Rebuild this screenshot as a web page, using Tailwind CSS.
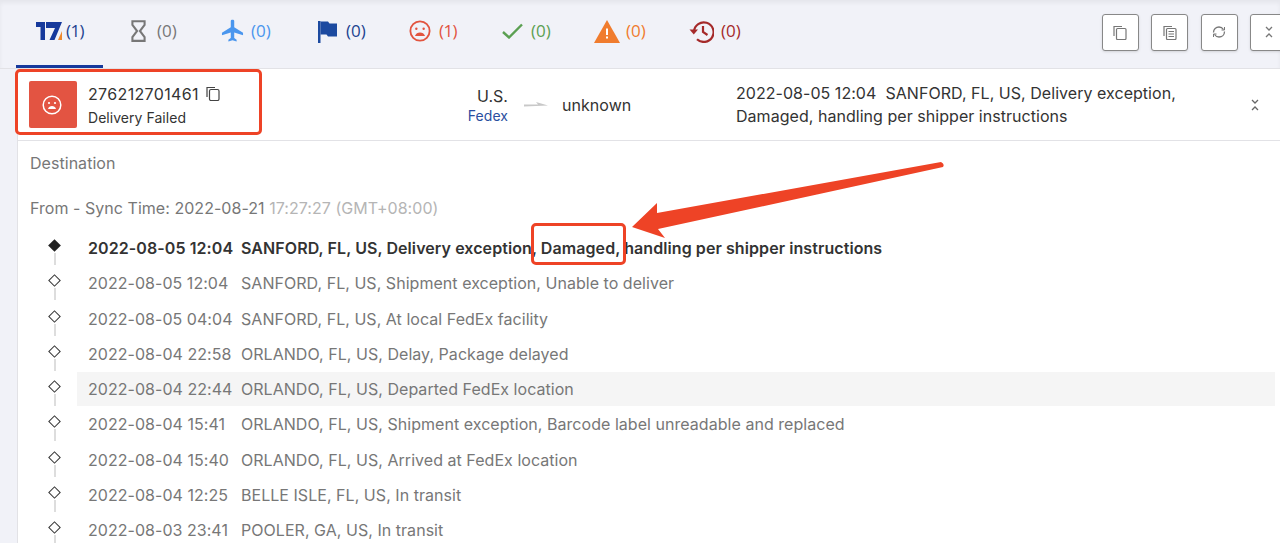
<!DOCTYPE html>
<html lang="en">
<head>
  <meta charset="UTF-8" />
  <title>Tracking result</title>
  <script src="https://cdn.jsdelivr.net/npm/@tailwindcss/browser@4"></script>
</head>
<body class="relative h-[543px] w-[1280px] overflow-hidden bg-[#f1f2f8] font-['Inter',sans-serif] text-[#333] tracking-[0.04px]">

  <!-- Status tabs -->
  <div class="flex h-[69px] items-center border-b border-[#e2e2e6] font-['Open_Sans',sans-serif] text-[17px] tracking-normal shadow-[inset_0_3px_4px_rgba(0,0,0,0.05)]">
    <div class="ml-4 flex h-[68px] w-[87px] items-center gap-[4px] border-b-[3px] border-[#16399c] pb-[3px] pl-[20px] text-[#1c4390]">
      <svg width="26" height="20" viewBox="0 0 26 20"><path d="M0 1h9v18H4.500V6H0z" fill="#16399c"/><path d="M10 1h16l-7.500 18h-5l5.500-12H10z" fill="#16399c"/><path d="M26 10v9h-4z" fill="#f08a2e"/></svg>
      <span class="tracking-[-0.6px]">(1)</span>
    </div>
    <div class="ml-[28px] flex w-[90px] items-center gap-[11px] pb-[6px] text-[#777]">
      <svg width="15" height="24" viewBox="0 0 16 24" fill="none" stroke="#777" stroke-width="2.200"><path d="M1.500 1.500h13v4L9.500 12l5 6.500v4h-13v-4l5-6.500-5-6.500z"/></svg>
      <span>(0)</span>
    </div>
    <div class="flex w-[97px] items-center gap-[7px] pb-[6px] text-[#4a96ee]">
      <svg width="23" height="24" viewBox="0 0 24 24" fill="#4a96ee"><path d="M10.200 1.500c0-.8.800-1.200 1.800-1.200s1.800.4 1.800 1.200v6.700L23 13.800v2.600l-9.200-2.900v5.700l2.500 2v1.800L12 21.700 7.700 23v-1.800l2.500-2v-5.700L1 16.400v-2.600l9.200-5.600z"/></svg>
      <span>(0)</span>
    </div>
    <div class="flex w-[91px] items-center gap-[9px] pb-[6px] text-[#1c4390]">
      <svg width="19" height="23" viewBox="0 0 19 23" fill="#1c4aa0"><path d="M0 1h2.500v22H0z"/><path d="M2.500 1.500H10l1.500 2H19v13H10l-1.500-2h-6z"/></svg>
      <span>(0)</span>
    </div>
    <div class="flex w-[93px] items-center gap-[8px] pb-[6px] text-[#e2543f]">
      <svg width="22" height="22" viewBox="0 0 24 24" fill="none" stroke="#e2543f" stroke-width="2"><circle cx="12" cy="12" r="10.500"/><circle cx="8" cy="9.500" r="1.300" fill="#e2543f" stroke="none"/><circle cx="16" cy="9.500" r="1.300" fill="#e2543f" stroke="none"/><path d="M6.500 17.500c1-3 3-4 5.500-4s4.500 1 5.500 4z" fill="#e2543f" stroke="none"/></svg>
      <span class="tracking-[-0.6px]">(1)</span>
    </div>
    <div class="flex w-[92px] items-center gap-[8px] pb-[6px] text-[#5ba052]">
      <svg width="21" height="16" viewBox="0 0 21 16" fill="none" stroke="#5ba052" stroke-width="2.400"><path d="M1 9l6 5.500L20 1.500"/></svg>
      <span>(0)</span>
    </div>
    <div class="flex w-[95px] items-center gap-[6px] pb-[6px] text-[#f07c2e]">
      <svg width="26" height="23" viewBox="0 0 26 23"><path d="M13 0l13 23H0z" fill="#f07c2e"/><path d="M12 8.500h2v6.500h-2zM12 16.500h2v2h-2z" fill="#fff"/></svg>
      <span>(0)</span>
    </div>
    <div class="flex items-center gap-[7px] pb-[6px] text-[#a52a2a]">
      <svg width="25" height="23" viewBox="0 0 25 23" fill="none" stroke="#a52a2a" stroke-width="2.200"><path d="M5 11.500a9.800 9.800 0 1 1 3 7.700"/><path d="M0.500 9.500h8.500L4.800 14.500z" fill="#a52a2a" stroke="none"/><path d="M14 6v6l4.500 3"/></svg>
      <span>(0)</span>
    </div>

    <!-- Toolbar buttons -->
    <div class="ml-auto -mr-[7px] -mt-[4px] flex gap-[12.500px]">
      <button class="flex h-[37px] w-[37px] items-center justify-center rounded-[3px] border border-[#888] bg-white shadow-sm">
        <svg width="14" height="15" viewBox="0 0 14 15" fill="none" stroke="#777" stroke-width="1.200"><path d="M1 11V1.500h8"/><rect x="3.500" y="3.500" width="9.500" height="11" rx="1"/></svg>
      </button>
      <button class="flex h-[37px] w-[37px] items-center justify-center rounded-[3px] border border-[#888] bg-white shadow-sm">
        <svg width="14" height="15" viewBox="0 0 14 15" fill="none" stroke="#777" stroke-width="1.200"><path d="M1 11V1.500h8"/><rect x="3.500" y="3.500" width="9.500" height="11" rx="1"/><path d="M5.500 6.500h5.500M5.500 9h5.500M5.500 11.500h5.500"/></svg>
      </button>
      <button class="flex h-[37px] w-[37px] items-center justify-center rounded-[3px] border border-[#888] bg-white shadow-sm">
        <svg width="14" height="12" viewBox="0 0 14 12" fill="none" stroke="#777" stroke-width="1.300"><path d="M1.500 6.500C1.500 3 4 1 7 1c2 0 3.500 1 4.500 2.500"/><path d="M12.500 5.500C12.500 9 10 11 7 11c-2 0-3.500-1-4.500-2.500"/><path d="M9.500 4h3V1M4.500 8h-3v3" stroke-width="1"/></svg>
      </button>
      <button class="flex h-[37px] w-[37px] items-center justify-center rounded-[3px] border border-[#888] bg-white shadow-sm">
        <svg width="8" height="12" viewBox="0 0 8 12" fill="none" stroke="#777" stroke-width="1.300"><path d="M1 1l3 3 3-3M1 11l3-3 3 3"/></svg>
      </button>
    </div>
  </div>

  <!-- Result card -->
  <div class="ml-[17px] h-[474px] border-l border-[#e2e2e6] bg-white">
    <div class="flex h-[72px] items-center border-b border-[#e2e2e6] text-[16px]">
      <div class="ml-[11px] flex h-[47px] w-[48px] items-center justify-center rounded-[2px] bg-[#e35442]">
        <svg class="-ml-[2px]" width="20" height="20" viewBox="0 0 20 20" fill="none" stroke="#fff" stroke-width="1.500"><circle cx="10" cy="10" r="8.800"/><circle cx="7" cy="8" r="1.100" fill="#fff" stroke="none"/><circle cx="13" cy="8" r="1.100" fill="#fff" stroke="none"/><path d="M6 14c.7-2.200 2.200-3 4-3s3.300.8 4 3z" fill="#fff" stroke="none"/></svg>
      </div>
      <div class="ml-[11px] w-[170px]">
        <div class="flex items-center gap-[7px] leading-[22px]">
          <span class="tracking-[0.35px]">276212701461</span>
          <svg class="-mt-[1px]" width="14" height="15" viewBox="0 0 14 15" fill="none" stroke="#444" stroke-width="1.200"><path d="M1 11V1.500h8"/><rect x="3.500" y="3.500" width="9.500" height="11" rx="1.500"/></svg>
        </div>
        <div class="mt-[4px] text-[14px] leading-[18px]">Delivery Failed</div>
      </div>
      <div class="ml-[188px] w-[62px] text-right">
        <div class="leading-[22px]">U.S.</div>
        <div class="text-[14px] leading-[18px] text-[#2a4ea0]">Fedex</div>
      </div>
      <svg class="ml-[16px]" width="25" height="8" viewBox="0 0 25 8"><path d="M0 3.500h14L12 1l12 3.500-24 1z" fill="#c8c8c8"/></svg>
      <div class="ml-[13px] w-[174px]">unknown</div>
      <div class="w-[470px] leading-[23px]">2022-08-05 12:04&nbsp; SANFORD, FL, US, Delivery exception, Damaged, handling per shipper instructions</div>
      <svg class="ml-[45px]" width="8" height="12" viewBox="0 0 8 12" fill="none" stroke="#666" stroke-width="1.300"><path d="M1 1l3 3 3-3M1 11l3-3 3 3"/></svg>
    </div>

    <div class="px-3 text-[16px] text-[#777]">
      <div class="pt-[12px] leading-[20px]">Destination</div>
      <div class="mt-[25px] leading-[20px]">From - Sync Time: 2022-08-21 <span class="text-[#b5b5b5]">17:27:27 (GMT+08:00)</span></div>
    </div>

    <!-- Timeline, filled in below -->
    <ul id="events" class="mt-[12.500px] text-[16px] text-[#777]">
      <li class="flex h-[35.250px] items-center font-semibold tracking-[0.08px] text-[#333]">
        <span class="relative ml-[32px] -mt-[5px] h-[9px] w-[9px]">
          <span class="block h-full w-full rotate-45 bg-[#222]"></span>
          <span class="absolute left-[3.500px] top-[12px] h-[12px] w-[2px] bg-[#ddd]"></span>
        </span>
        <span class="ml-[18px] flex h-[34px] w-[1198px] items-center pl-[11px]"><span class="w-[153px]">2022-08-05 12:04</span><span>SANFORD, FL, US, Delivery exception, Damaged, handling per shipper instructions</span></span>
      </li>
    </ul>
  </div>

  <!-- Screenshot annotations -->
  <div class="absolute left-[15px] top-[69px] h-[66px] w-[247px] rounded-[5px] border-[3px] border-[#ee4326]"></div>
  <div class="absolute left-[531px] top-[223px] h-[42px] w-[95px] rounded-[5px] border-[3px] border-[#ee4326]"></div>
  <svg class="absolute left-[625px] top-[155px]" width="325" height="85" viewBox="0 0 325 85"><path d="M7 72 L32 48 L32 58 L316 7 Q320 9 318 12 L33 74 L40 83 Z" fill="#ee4326"/></svg>

  <script>
    const events = [
      ['2022-08-05 12:04', 'SANFORD, FL, US, Shipment exception, Unable to deliver'],
      ['2022-08-05 04:04', 'SANFORD, FL, US, At local FedEx facility'],
      ['2022-08-04 22:58', 'ORLANDO, FL, US, Delay, Package delayed'],
      ['2022-08-04 22:44', 'ORLANDO, FL, US, Departed FedEx location'],
      ['2022-08-04 15:41', 'ORLANDO, FL, US, Shipment exception, Barcode label unreadable and replaced'],
      ['2022-08-04 15:40', 'ORLANDO, FL, US, Arrived at FedEx location'],
      ['2022-08-04 12:25', 'BELLE ISLE, FL, US, In transit'],
      ['2022-08-03 23:41', 'POOLER, GA, US, In transit'],
    ];

    const list = document.getElementById('events');
    events.forEach(([time, text], index) => {
      const row = document.createElement('li');
      row.className = 'flex h-[35.250px] items-center';
      row.innerHTML = `
        <span class="relative ml-[32px] -mt-[5px] h-[9px] w-[9px]">
          <span class="block h-full w-full rotate-45 border border-[#333]"></span>
          <span class="absolute left-[3.500px] top-[12px] h-[12px] w-[2px] bg-[#ddd]"></span>
        </span>
        <span class="ml-[18px] flex h-[34px] w-[1198px] items-center pl-[11px] ${index === 3 ? 'bg-[#f5f5f5]' : ''}"><span class="w-[153px]">${time}</span><span>${text}</span></span>
      `;
      list.appendChild(row);
    });
  </script>
</body>
</html>
